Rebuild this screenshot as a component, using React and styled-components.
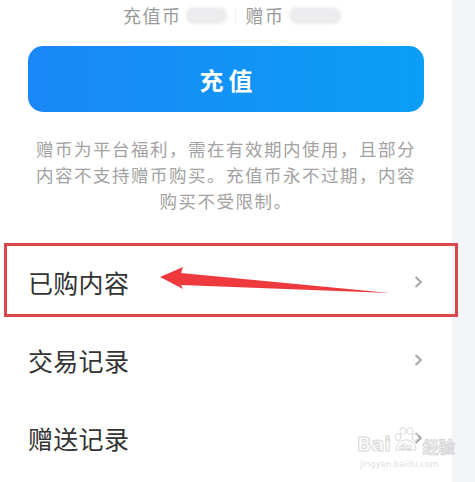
import React from "react";
import styled, { createGlobalStyle } from "styled-components";

const Global = createGlobalStyle`
  html, body { margin: 0; padding: 0; background: #ffffff; }
  body { font-family: "Noto Sans CJK SC", "Noto Sans", sans-serif; }
  * { box-sizing: border-box; }
`;

const Page = styled.div`
  display: flex;
  width: 475px;
  height: 482px;
  overflow: hidden;
  position: relative;
`;

const Main = styled.div`
  width: 452px;
  flex: none;
  display: flex;
  flex-direction: column;
  background: #ffffff;
  & > * { flex-shrink: 0; }
`;

const Side = styled.div`
  flex: 1;
  background: #f4f5f7;
`;

const Balance = styled.div`
  height: 30px;
  display: flex;
  align-items: center;
  padding-left: 123px;
  font-size: 18px;
  color: #9a9a9a;
  letter-spacing: 1.5px;
`;

const Label = styled.span`
  line-height: 20px;
`;

const Blur = styled.span`
  display: inline-block;
  width: ${(p) => p.w}px;
  height: 17px;
  margin-left: 4px;
  border-radius: 8px;
  background: #ececee;
  filter: blur(1.5px);
`;

const Divider = styled.span`
  width: 1px;
  height: 16px;
  background: #f0f0f0;
  margin: 0 10px 0 8px;
`;

const ButtonWrap = styled.div`
  padding: 16px 28px 0;
`;

const Recharge = styled.button`
  width: 100%;
  height: 66px;
  border: none;
  border-radius: 15px;
  background: linear-gradient(90deg, #1a87f7 0%, #0b9ef6 100%);
  color: #ffffff;
  font-family: "Noto Sans CJK SC", sans-serif;
  font-size: 24px;
  font-weight: 700;
  letter-spacing: 5px;
  padding: 0 0 0 5px;
  display: flex;
  align-items: center;
  justify-content: center;
`;

const Note = styled.p`
  margin: 24px 0 0;
  text-align: center;
  font-size: 17.5px;
  line-height: 26px;
  letter-spacing: 1.5px;
  color: #a2a2a2;
`;

const Menu = styled.div`
  margin-top: 29px;
  display: flex;
  flex-direction: column;
`;

const Row = styled.div`
  position: relative;
  height: 78px;
  padding: 0 29px 0 28px;
  display: flex;
  align-items: center;
  justify-content: space-between;
`;

const RowText = styled.span`
  font-size: 25px;
  color: #333333;
  letter-spacing: 0.3px;
  margin-top: ${(p) => p.offset || 0}px;
`;

const Mark = styled.div`
  position: absolute;
  left: 4px;
  top: 0;
  width: 454px;
  height: 74px;
  border: 3px solid #d9474a;
  pointer-events: none;
`;

const Arrow = styled.svg`
  position: absolute;
  left: 0;
  top: 0;
  pointer-events: none;
`;

const Watermark = styled.div`
  position: absolute;
  left: 357px;
  top: 426px;
  color: #e2e2e2;
  font-family: "DejaVu Sans", sans-serif;
  display: flex;
  flex-direction: column;
  align-items: flex-start;
  pointer-events: none;
`;

const WmTop = styled.div`
  display: flex;
  align-items: flex-end;
  font-size: 19px;
  font-weight: 700;
  line-height: 1;
  color: transparent;
  -webkit-text-stroke: 1px #d6d6d6;
`;

const WmCn = styled.span`
  font-family: "Noto Sans CJK SC", sans-serif;
  font-size: 16px;
  margin-left: 2px;
`;

const WmSub = styled.div`
  font-size: 8.5px;
  margin-top: 5px;
  margin-left: 3px;
  color: #e0e0e0;
`;

const Chevron = () => (
  <svg width="9" height="12" viewBox="0 0 9 12">
    <path d="M2 1.5 L7 6 L2 10.5" fill="none" stroke="#a3a3a3" strokeWidth="1.8" strokeLinecap="round" strokeLinejoin="round" />
  </svg>
);

const Paw = () => (
  <svg width="30" height="28" viewBox="0 0 30 28">
    <g fill="none" stroke="#d8d8d8" strokeWidth="1">
      <ellipse cx="7" cy="11" rx="3" ry="3.5" />
      <ellipse cx="12" cy="5" rx="3" ry="3.5" />
      <ellipse cx="19" cy="5" rx="3" ry="3.5" />
      <ellipse cx="24" cy="11" rx="3" ry="3.5" />
      <path d="M5 24 C5 16 11 14 15 14 C19 14 25 16 25 24 Z" />
    </g>
    <text x="8" y="24" fontSize="9" fill="none" stroke="#d0d0d0" strokeWidth="0.6" fontFamily="DejaVu Sans">du</text>
  </svg>
);

const rows = [
  { text: "已购内容", mark: true },
  { text: "交易记录" },
  { text: "赠送记录" },
];

export default function App() {
  return (
    <>
      <Global />
      <Page>
        <Main>
          <Balance>
            <Label>充值币</Label>
            <Blur w={41} />
            <Divider />
            <Label>赠币</Label>
            <Blur w={52} />
          </Balance>
          <ButtonWrap>
            <Recharge>充值</Recharge>
          </ButtonWrap>
          <Note>
            赠币为平台福利，需在有效期内使用，且部分
            <br />
            内容不支持赠币购买。充值币永不过期，内容
            <br />
            购买不受限制。
          </Note>
          <Menu>
            {rows.map((r) => (
              <Row key={r.text}>
                <RowText offset={r.mark ? -1 : 0}>{r.text}</RowText>
                <Chevron />
                {r.mark && (
                  <>
                    <Mark />
                    <Arrow width="452" height="78" viewBox="0 0 452 78">
                      <polygon
                        points="160,34 183,24 181,30 390,50 181,42 183,46"
                        fill="#ee3a3c"
                      />
                    </Arrow>
                  </>
                )}
              </Row>
            ))}
          </Menu>
        </Main>
        <Side />
        <Watermark>
          <WmTop>
            Bai
            <Paw />
            <WmCn>经验</WmCn>
          </WmTop>
          <WmSub>jingyan.baidu.com</WmSub>
        </Watermark>
      </Page>
    </>
  );
}
